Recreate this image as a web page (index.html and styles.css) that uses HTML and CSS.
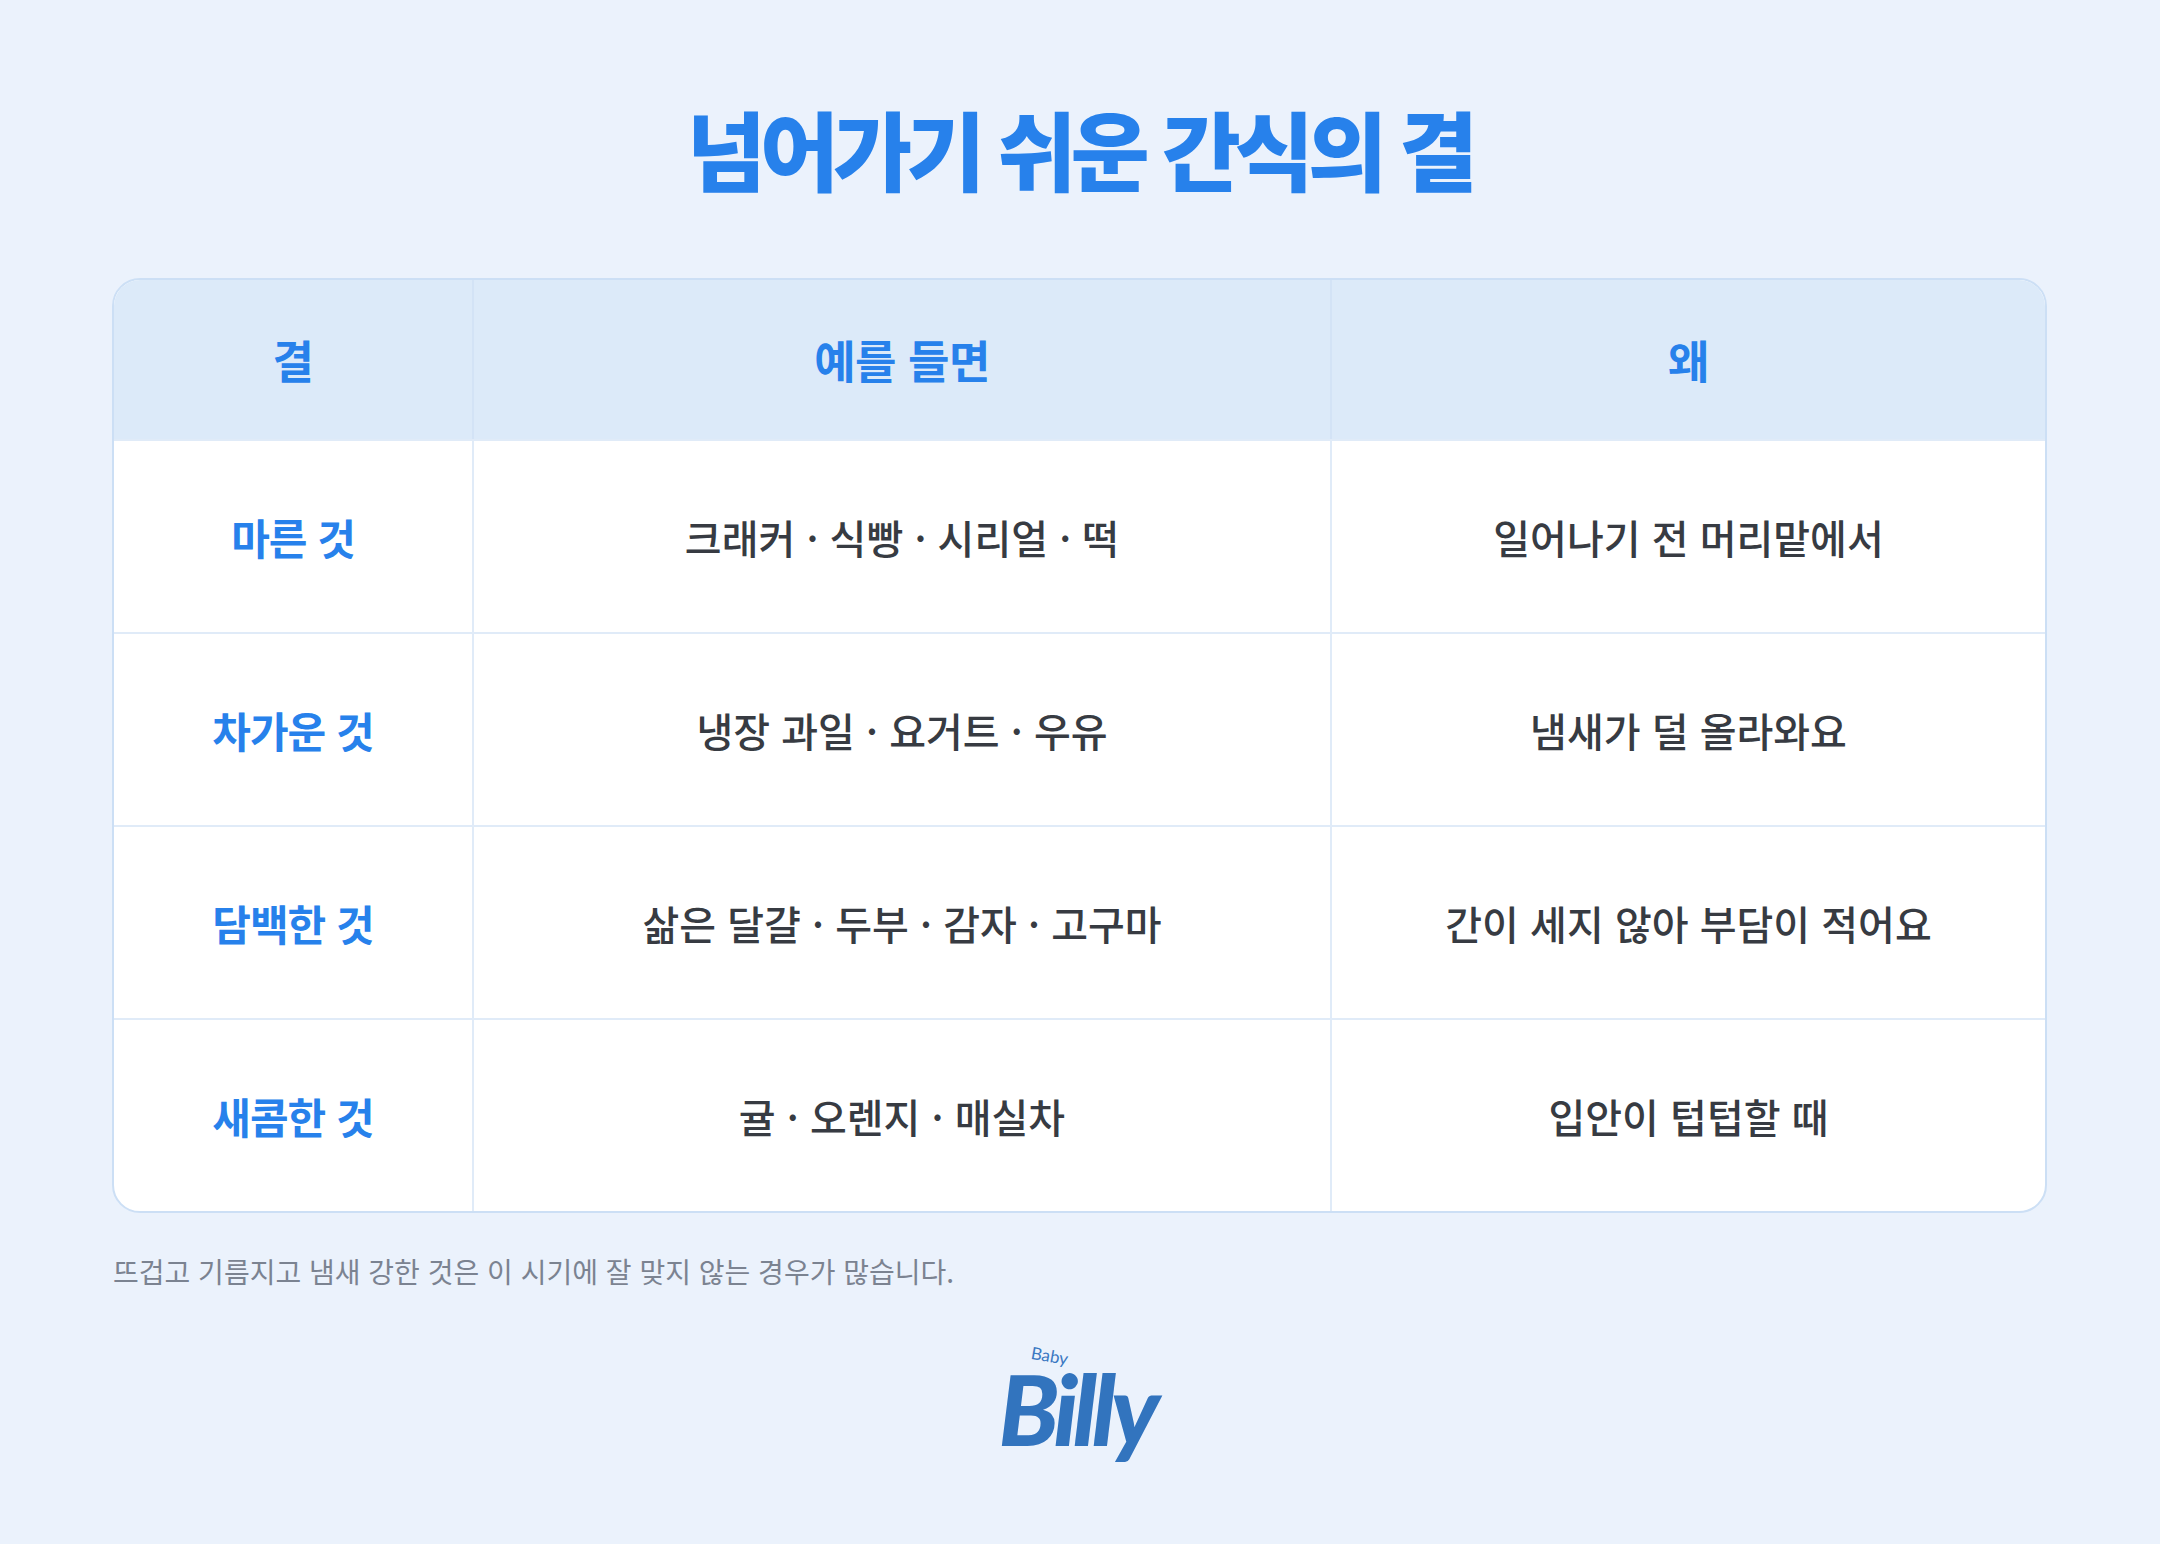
FILE: index.html
```html
<!DOCTYPE html>
<html lang="ko">
<head>
<meta charset="utf-8">
<title>넘어가기 쉬운 간식의 결</title>
<link rel="stylesheet" href="styles.css">
</head>
<body>
<main class="page">
  <h1 class="title">넘어가기 쉬운 간식의 결</h1>
  <div class="table">
    <div class="row head">
      <div class="cell">결</div>
      <div class="cell">예를 들면</div>
      <div class="cell">왜</div>
    </div>
    <div class="row">
      <div class="cell label">마른 것</div>
      <div class="cell">크래커 · 식빵 · 시리얼 · 떡</div>
      <div class="cell">일어나기 전 머리맡에서</div>
    </div>
    <div class="row">
      <div class="cell label">차가운 것</div>
      <div class="cell">냉장 과일 · 요거트 · 우유</div>
      <div class="cell">냄새가 덜 올라와요</div>
    </div>
    <div class="row">
      <div class="cell label">담백한 것</div>
      <div class="cell">삶은 달걀 · 두부 · 감자 · 고구마</div>
      <div class="cell">간이 세지 않아 부담이 적어요</div>
    </div>
    <div class="row">
      <div class="cell label">새콤한 것</div>
      <div class="cell">귤 · 오렌지 · 매실차</div>
      <div class="cell">입안이 텁텁할 때</div>
    </div>
  </div>
  <p class="note">뜨겁고 기름지고 냄새 강한 것은 이 시기에 잘 맞지 않는 경우가 많습니다.</p>
  <div class="logo">
    <span class="baby">Baby</span>
    <span class="billy">Billy</span>
  </div>
</main>
</body>
</html>
```
FILE: styles.css
```css
html, body {
  margin: 0;
  padding: 0;
}
body {
  background: #EBF2FC;
  font-family: "Noto Sans CJK KR", "Noto Sans", sans-serif;
  width: 2160px;
  height: 1544px;
  overflow: hidden;
}
.page {
  display: flex;
  flex-direction: column;
  align-items: center;
  padding: 0 113px 0 112px;
}
.title {
  margin: 88px 0 0;
  font-size: 86px;
  line-height: 120px;
  font-weight: 900;
  color: #2781EB;
  letter-spacing: -6px;
}
.table {
  margin-top: 70px;
  width: 100%;
  box-sizing: border-box;
  border: 2px solid #CCDFF5;
  border-radius: 28px;
  overflow: hidden;
  background: #FFFFFF;
}
.row {
  display: grid;
  grid-template-columns: 358px 858px 1fr;
  height: 191px;
  border-top: 2px solid #E0EBF8;
}
.row.head {
  height: 159px;
  border-top: none;
  background: #DCEAF9;
}
.cell {
  display: flex;
  align-items: center;
  justify-content: center;
  font-size: 40px;
  font-weight: 500;
  color: #373B42;
  letter-spacing: 0;
}
.cell + .cell {
  border-left: 2px solid #E0EBF8;
}
.head .cell + .cell {
  border-left-color: #D3E3F6;
}
.head .cell {
  font-size: 45px;
  font-weight: 700;
  color: #2781EB;
  letter-spacing: -0.5px;
}
.cell.label {
  font-size: 42px;
  font-weight: 700;
  color: #2781EB;
  letter-spacing: -1px;
}
.note {
  align-self: flex-start;
  margin: 38px 0 0 1px;
  font-size: 28px;
  line-height: 40px;
  color: #7B8391;
  letter-spacing: 0;
}
.logo {
  position: relative;
  margin-top: 52px;
  width: 170px;
  height: 130px;
}
.baby {
  position: absolute;
  left: 36px;
  top: 2px;
  font-family: "Lato", sans-serif;
  font-size: 17px;
  color: #3A78C2;
  transform: rotate(10deg);
}
.billy {
  position: absolute;
  left: 4px;
  top: 6px;
  font-family: "Lato", sans-serif;
  font-style: italic;
  font-weight: 900;
  font-size: 98px;
  line-height: 118px;
  letter-spacing: -5px;
  color: #3274BE;
}
```
